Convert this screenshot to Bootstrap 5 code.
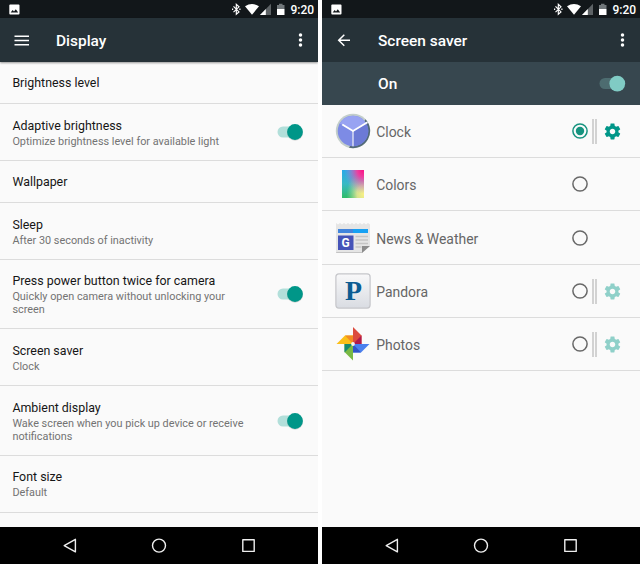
<!DOCTYPE html>
<html lang="en">
<head>
<meta charset="utf-8">
<meta name="viewport" content="width=device-width, initial-scale=1">
<title>Display settings</title>
<link href="https://cdn.jsdelivr.net/npm/bootstrap@5.3.0/dist/css/bootstrap.min.css" rel="stylesheet">
<style>
body{font-family:Roboto,"Noto Sans",sans-serif;background:#fff;color:#161616;height:564px;overflow:hidden}
svg{display:block;flex:none}
.screens{gap:4px;height:564px}
.phone{width:318px;height:564px;background:#fafafa}
.statusbar{height:18px;background:#12171a;color:#fff;padding:0 5.5px 0 8.5px}
.time{font-size:12px;font-weight:500;line-height:18px;width:22px;margin-left:5px;padding-top:1px;white-space:nowrap}
.toolbar{height:44px;background:#263238;color:#fff;padding:0 8px 0 12px}
.shadowed{box-shadow:0 1px 2px rgba(0,0,0,.4);z-index:1}
.heading{font-size:15.46px;font-weight:500;line-height:20px}
.toolbar .heading{padding-top:2px}
.masterbar{height:43px;background:#37474f;color:#fff;padding:0 14px 0 56px}
.setting{border-bottom:1px solid #dcdcdc;padding:0 14px 0 12.4px;background:transparent}
.h1line{height:42px}.h2line{height:57px}.h3line{height:69px}.h3tall{height:70px}
.label{font-size:12.4px;line-height:15px}
.note{font-size:10.87px;line-height:12.6px;color:#737373;margin-top:2px;padding-top:1px}
.notebox{max-width:242px;padding-top:2px}
.saver{height:53px;border-bottom:1px solid #dcdcdc;padding:0 18px 0 13px}
.saver.tall{height:54px}
.saver-name{font-size:13.95px;line-height:20px;color:#666;margin-left:5.2px;padding-top:2px}
.switch{width:27px;height:18px}
.controls{width:50px}
.sep{width:5px;height:25px;border-left:2px solid #d2d2d2;border-right:2px solid #d2d2d2;margin-left:4px}
.gear{fill:#009688;margin-left:5.5px}
.gear.dim{fill:#8fd0c9}
.navbar-keys{height:37px;background:#000}
</style>
</head>
<body>
<svg width="0" height="0" class="position-absolute" aria-hidden="true">
<defs>
<symbol id="photo" viewBox="0 0 11 11"><path fill="#fff" fill-rule="evenodd" d="M1.2.4h8.4q.9 0 .9.9v8.2q0 .9-.9.9H1.2q-.9 0-.9-.9V1.300q0-.9.900-.900zM1.600 8.600h7.600L6.800 5.300 5 7.500 3.700 6.100z"/></symbol>
<symbol id="status" viewBox="0 0 54 18">
<path d="M1.500 6.300 7 11.900 4.300 14.300V4.300L7 6.800 1.500 12.100" fill="none" stroke="#fff" stroke-width="1.150"/><path fill="#fff" d="M0 8.600h1.200v1.300H0zM7.300 8.600h1.200v1.300H7.300z"/>
<path fill="#fff" d="M13 6.300Q20 1.700 27 6.300L20 14.800z"/>
<path fill="#5d6265" d="M39 3.700V15H28z"/><path fill="#fff" d="M33.800 9V15H28z"/>
<path fill="#71777a" d="M45 5h2V3.700h3.500V5h2v4H45z"/><path fill="#fff" d="M45 9h7.500v6H45z"/>
</symbol>
<symbol id="dots" viewBox="0 0 6 16"><circle cx="3" cy="2.900" r="1.750" fill="#fff"/><circle cx="3" cy="8" r="1.750" fill="#fff"/><circle cx="3" cy="13.100" r="1.750" fill="#fff"/></symbol>
<symbol id="toggle" viewBox="0 0 27 18"><rect x=".5" y="3.500" width="22" height="11" rx="5.500" fill="#b2dfda"/><circle cx="18" cy="9.700" r="8" fill="#000" opacity=".15"/><circle cx="18" cy="9" r="7.900" fill="#009688"/></symbol>
<symbol id="cog" viewBox="0 0 24 24"><path d="M19.430 12.980c.040-.320.070-.640.070-.980s-.030-.660-.070-.980l2.110-1.650c.190-.150.240-.420.120-.640l-2-3.460c-.120-.220-.390-.300-.610-.220l-2.490 1c-.520-.400-1.080-.730-1.690-.980l-.380-2.650C14.460 2.180 14.250 2 14 2h-4c-.250 0-.460.180-.490.420l-.380 2.650c-.610.250-1.170.590-1.690.980l-2.490-1c-.230-.090-.490 0-.610.220l-2 3.460c-.130.220-.070.490.120.640l2.110 1.650c-.040.320-.070.650-.070.980s.030.660.070.980l-2.110 1.650c-.190.150-.240.420-.120.640l2 3.460c.120.220.390.300.610.220l2.490-1c.520.400 1.080.730 1.690.980l.380 2.650c.030.240.240.420.490.420h4c.250 0 .460-.180.490-.420l.380-2.650c.610-.250 1.170-.590 1.690-.980l2.490 1c.230.090.490 0 .610-.220l2-3.460c.120-.220.070-.490-.120-.640l-2.110-1.650zM12 15.500c-1.930 0-3.500-1.570-3.500-3.500s1.570-3.500 3.500-3.500 3.500 1.570 3.500 3.500-1.570 3.500-3.500 3.500z"/></symbol>
<symbol id="ring" viewBox="0 0 16 16"><circle cx="8" cy="8" r="7.100" fill="none" stroke="#686868" stroke-width="1.500"/></symbol>
<symbol id="keys" viewBox="0 0 318 37"><g fill="none" stroke="#eee" stroke-width="1.400" stroke-linejoin="round"><path d="M75.400 12.300V24.900L64.200 18.600z"/><circle cx="159" cy="18.600" r="6.500"/><path d="M242.800 12.800h11.400v11.600h-11.400z"/></g></symbol>
</defs>
</svg>

<main class="screens d-flex">
<section class="phone d-flex flex-column overflow-hidden">
  <div class="statusbar d-flex align-items-center flex-shrink-0">
    <svg width="11" height="11"><use href="#photo"/></svg>
    <svg class="ms-auto" width="54" height="18"><use href="#status"/></svg>
    <span class="time">9:20</span>
  </div>
  <header class="toolbar shadowed d-flex align-items-center flex-shrink-0 position-relative">
    <svg width="44" height="16" viewBox="0 0 44 16"><path d="M2.500 3.900h14.500M2.500 8.200h14.500M2.500 12.500h14.500" transform="translate(0 .3)" stroke="#fff" stroke-width="1.600"/></svg>
    <span class="heading">Display</span>
    <svg class="ms-auto" width="18" height="16" viewBox="0 0 18 16"><use href="#dots" x="4" width="6" height="16" transform="translate(1.500)"/></svg>
  </header>
  <div class="flex-grow-1 overflow-hidden">
    <div class="setting h1line d-flex align-items-center"><div class="label">Brightness level</div></div>
    <div class="setting h2line d-flex align-items-center justify-content-between"><div class="notebox"><div class="label">Adaptive brightness</div><div class="note">Optimize brightness level for available light</div></div><svg class="switch"><use href="#toggle"/></svg></div>
    <div class="setting h1line d-flex align-items-center"><div class="label">Wallpaper</div></div>
    <div class="setting h2line d-flex align-items-center"><div class="notebox"><div class="label">Sleep</div><div class="note">After 30 seconds of inactivity</div></div></div>
    <div class="setting h3line d-flex align-items-center justify-content-between"><div class="notebox"><div class="label">Press power button twice for camera</div><div class="note">Quickly open camera without unlocking your<br>screen</div></div><svg class="switch"><use href="#toggle"/></svg></div>
    <div class="setting h2line d-flex align-items-center"><div class="notebox"><div class="label">Screen saver</div><div class="note">Clock</div></div></div>
    <div class="setting h3tall d-flex align-items-center justify-content-between"><div class="notebox"><div class="label">Ambient display</div><div class="note">Wake screen when you pick up device or receive<br>notifications</div></div><svg class="switch"><use href="#toggle"/></svg></div>
    <div class="setting h2line d-flex align-items-center"><div><div class="label">Font size</div><div class="note">Default</div></div></div>
  </div>
  <nav class="navbar-keys flex-shrink-0"><svg width="318" height="37"><use href="#keys"/></svg></nav>
</section>

<section class="phone d-flex flex-column overflow-hidden">
  <div class="statusbar d-flex align-items-center flex-shrink-0">
    <svg width="11" height="11"><use href="#photo"/></svg>
    <svg class="ms-auto" width="54" height="18"><use href="#status"/></svg>
    <span class="time">9:20</span>
  </div>
  <header class="toolbar d-flex align-items-center flex-shrink-0">
    <svg width="44" height="16" viewBox="0 0 44 16"><path d="M16 8.300H4.800M10.300 2.800 4.700 8.300l5.600 5.500" fill="none" stroke="#fff" stroke-width="1.500"/></svg>
    <span class="heading">Screen saver</span>
    <svg class="ms-auto" width="18" height="16" viewBox="0 0 18 16"><use href="#dots" x="4" width="6" height="16" transform="translate(1.500)"/></svg>
  </header>
  <div class="masterbar d-flex align-items-center justify-content-between flex-shrink-0">
    <span class="heading">On</span>
    <svg width="27" height="18" viewBox="0 0 27 18"><rect x=".5" y="3" width="22" height="11" rx="5.500" fill="#4d6c70"/><circle cx="18.300" cy="8.600" r="7.900" fill="#80cbc4"/></svg>
  </div>
  <div class="flex-grow-1">
    <div class="saver d-flex align-items-center">
      <svg width="36" height="36" viewBox="0 0 36 36">
        <circle cx="18" cy="18" r="17.200" fill="#c3ceca"/><path d="M30.500 6.200A17.200 17.200 0 0 1 14 34.700z" fill="#536b78"/>
        <circle cx="18" cy="18" r="15.300" fill="#7d8be5"/><path d="M18 18 4.700 10.400A15.300 15.300 0 0 1 31.300 10.400z" fill="#98a3f2"/><path d="M18 18V33.300A15.300 15.300 0 0 0 31.300 10.400z" fill="#6c7ad6"/>
        <path d="M18 33.300V18" stroke="#d9dcf2" stroke-width="1.500"/><path d="M7.300 11.500 18 18 32.500 9.300" fill="none" stroke="#fff" stroke-width="1.900"/>
      </svg>
      <span class="saver-name">Clock</span>
      <div class="controls d-flex align-items-center ms-auto"><svg width="16" height="16" viewBox="0 0 16 16"><circle cx="8" cy="8" r="7.100" fill="none" stroke="#16937f" stroke-width="1.500"/><circle cx="8" cy="8" r="4.200" fill="#16937f"/></svg><span class="sep"></span><svg class="gear" width="19" height="19"><use href="#cog"/></svg></div>
    </div>
    <div class="saver d-flex align-items-center">
      <svg width="36" height="36" viewBox="0 0 36 36">
        <defs>
          <linearGradient id="base" x1="0" y1="0" x2="0" y2="1"><stop offset="0" stop-color="#29a9e8"/><stop offset=".5" stop-color="#39b9c4"/><stop offset="1" stop-color="#2fbd68"/></linearGradient>
          <radialGradient id="pink" cx=".95" cy="0" r=".85"><stop offset="0" stop-color="#fb1286"/><stop offset=".3" stop-color="#ec3fa0"/><stop offset="1" stop-color="#a98be0" stop-opacity="0"/></radialGradient>
          <radialGradient id="yellow" cx="1" cy=".85" r=".8"><stop offset="0" stop-color="#fbf282"/><stop offset=".4" stop-color="#e9e691" stop-opacity=".9"/><stop offset="1" stop-color="#a5dc96" stop-opacity="0"/></radialGradient>
        </defs>
        <path fill="url(#base)" d="M7 4h22v28H7z"/><path fill="url(#yellow)" d="M7 4h22v28H7z"/><path fill="url(#pink)" d="M7 4h22v28H7z"/>
      </svg>
      <span class="saver-name">Colors</span>
      <div class="controls ms-auto"><svg width="16" height="16"><use href="#ring"/></svg></div>
    </div>
    <div class="saver tall d-flex align-items-center">
      <svg width="36" height="36" viewBox="0 0 36 36">
        <path d="M1 3l2 1.500L5 3l2 1.500L9 3l2 1.500L13 3l2 1.500L17 3l2 1.500L21 3l2 1.500L25 3l2 1.500L29 3l2 1.500L33 3l2 1.500V26l-8 7H2q-1 0-1-1z" fill="#e5e5e5"/>
        <path d="M1.200 32.500h26" stroke="#c4c4c4" stroke-width="1"/>
        <path fill="#4285dc" d="M3 9h15v4H3z"/><path fill="#17a1f3" d="M18 9h15v4H18z"/>
        <path fill="#4553b8" d="M3 15.500h15.500v14.500H3z"/>
        <path d="M20.500 16.500h12.500M20.500 20h12.500M20.500 23.500h12.500M20.500 27h6" stroke="#c5c5c5" stroke-width="1.400"/>
        <path d="M27 33v-7h8z" fill="#8c8c8c"/>
        <text x="10.600" y="27" font-family="Roboto, sans-serif" font-size="12" font-weight="700" fill="#fff" text-anchor="middle">G</text>
      </svg>
      <span class="saver-name">News &amp; Weather</span>
      <div class="controls ms-auto"><svg width="16" height="16"><use href="#ring"/></svg></div>
    </div>
    <div class="saver d-flex align-items-center">
      <svg width="36" height="36" viewBox="0 0 36 36">
        <defs><linearGradient id="tile" x1="0" y1="0" x2="0" y2="1"><stop offset="0" stop-color="#f8f8f9"/><stop offset="1" stop-color="#d9dce2"/></linearGradient></defs>
        <rect x=".9" y=".9" width="34.200" height="34.200" rx="3" fill="url(#tile)" stroke="#c5c6ca" stroke-width="1.200"/>
        <text x="18.600" y="27" font-family="'Liberation Serif', serif" font-size="27" font-weight="700" fill="#0b5c92" text-anchor="middle" textLength="17" lengthAdjust="spacingAndGlyphs">P</text>
      </svg>
      <span class="saver-name">Pandora</span>
      <div class="controls d-flex align-items-center ms-auto"><svg width="16" height="16"><use href="#ring"/></svg><span class="sep"></span><svg class="gear dim" width="19" height="19"><use href="#cog"/></svg></div>
    </div>
    <div class="saver d-flex align-items-center">
      <svg width="36" height="36" viewBox="0 0 36 36">
        <path fill="#dc4b3e" d="M18 1 26.500 9.500V18H18z"/><path fill="#b0194b" d="M26.500 9.500V18H18z"/>
        <path fill="#4a80ee" d="M34.500 18 26 26.500H18V18z"/><path fill="#3155c8" d="M18 18v8.500h8z"/>
        <path fill="#79b944" d="M18 34.500 9.500 26V18H18z"/><path fill="#16896f" d="M18 18H9.500v8.500z"/>
        <path fill="#fbbf18" d="M1.500 18 10 9.500H18V18z"/><path fill="#f28b23" d="M18 18V9.500h-8z"/>
        <circle cx="18" cy="18" r="1.900" fill="#f5f3ed"/>
      </svg>
      <span class="saver-name">Photos</span>
      <div class="controls d-flex align-items-center ms-auto"><svg width="16" height="16"><use href="#ring"/></svg><span class="sep"></span><svg class="gear dim" width="19" height="19"><use href="#cog"/></svg></div>
    </div>
  </div>
  <nav class="navbar-keys flex-shrink-0"><svg width="318" height="37"><use href="#keys"/></svg></nav>
</section>
</main>
<script src="https://cdn.jsdelivr.net/npm/bootstrap@5.3.0/dist/js/bootstrap.bundle.min.js"></script>
</body>
</html>
